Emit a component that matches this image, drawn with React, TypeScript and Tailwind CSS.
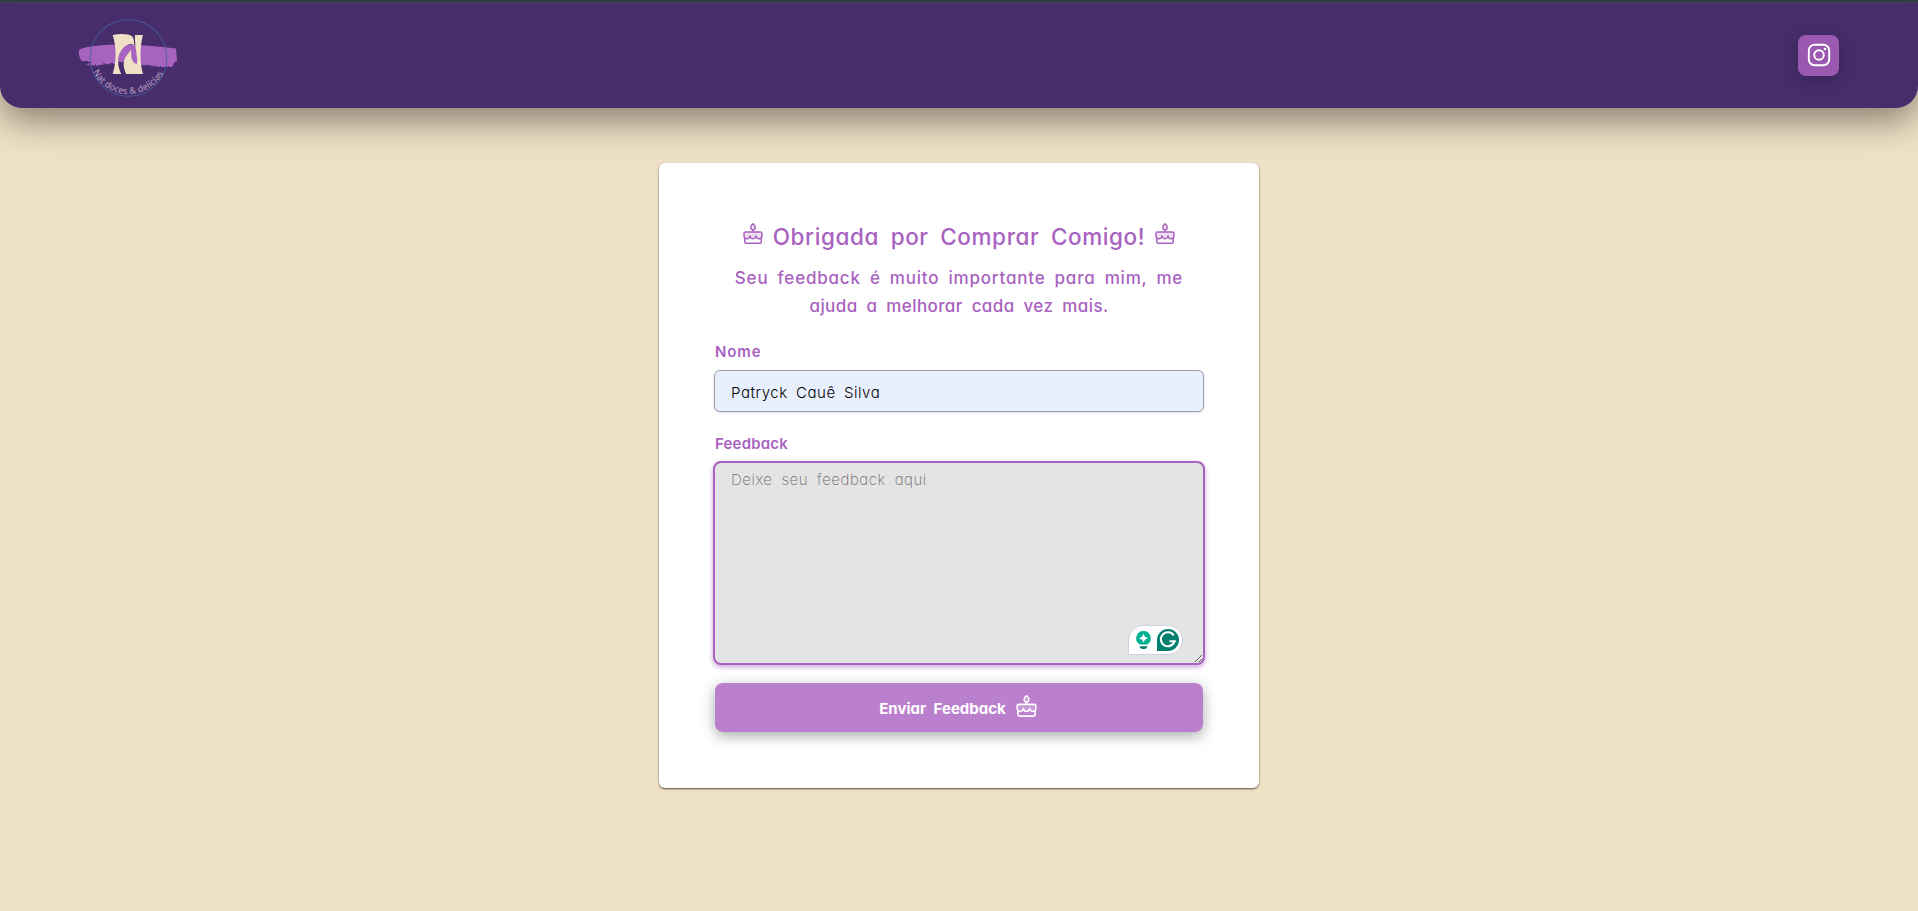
import { PiCakeDuotone } from "react-icons/pi";

function Logo() {
  return (
    <svg width="100" height="80" viewBox="78 18 100 80" className="block">
      <defs>
        <path id="logo-arc" d="M 93 71.500 A 39.250 39.250 0 0 0 164 71.500" />
        <filter id="rough" x="-5%" y="-20%" width="110%" height="140%">
          <feTurbulence type="fractalNoise" baseFrequency="0.35" numOctaves="2" seed="4" />
          <feDisplacementMap in="SourceGraphic" scale="3" />
        </filter>
      </defs>
      <g fill="#a862bf">
        <path d="M79 50 C83 47 95 45.500 110 44.800 C125 44 145 44.500 176 48.500 L177 61 L172 63 L140 62 L100 61.500 L82 61 C79 58 78.500 53 79 50Z" />
        <path
          filter="url(#rough)"
          d="M82 60 L176 60 L172 67 L160 67 L148 65 L130 65.500 L110 63.500 L96 65.500 L86 65 L92 62Z"
        />
      </g>
      <circle cx="128.500" cy="58" r="38.300" fill="none" stroke="#46609c" strokeOpacity="0.75" strokeWidth="1.200" />
      <path
        fill="#472d6b"
        d="M118.200 62 L124 62 C124 66 124.500 70 126.300 74 L121.300 74 C119 69 118 66 118.200 62Z"
      />
      <path
        fill="#efe0c6"
        d="M112.700 35 C118 33.600 124 33.600 128 34.600 C132.500 35.700 134 38 134 42 L134 45.500 L131.700 44 C126 43.500 121 49 118.700 56 C117.300 61 118.200 68 121.300 74 L112.700 74 C116.600 62 116.600 47 112.700 35Z"
      />
      <path
        fill="#efe0c6"
        d="M134.900 35 L142.900 35 C139.800 47 139.800 62 142.900 74 L126.200 74 C123 67 122.800 61 126 56.500 C128 53.500 130 51.500 131.200 49.500 C130.500 57 132 63 137 64 C138 56 134.600 48 134.900 35Z"
      />
      <text fill="#bda8cc" className="font-['Open_Sans',sans-serif] text-[9px]">
        <textPath href="#logo-arc" startOffset="0.300" textLength="86">
          Nat doces &amp; delícias
        </textPath>
      </text>
    </svg>
  );
}

function InstagramIcon() {
  return (
    <svg
      width="24"
      height="24"
      viewBox="0 0 24 24"
      fill="none"
      stroke="#fff"
      strokeWidth="1.900"
      className="mb-px"
    >
      <rect x="1.800" y="1.800" width="20.400" height="20.400" rx="5.800" />
      <circle cx="12" cy="12" r="4.800" />
      <circle cx="18" cy="6" r="1.300" fill="#fff" stroke="none" />
    </svg>
  );
}

function WritingAssistant() {
  return (
    <div className="absolute right-[22px] bottom-[10px] flex h-[30px] w-[55px] items-center gap-[6px] rounded-[15px] rounded-bl-none border border-[#cdd0e0] bg-white pl-[7px]">
      <svg width="15" height="20" viewBox="0 0 15 20">
        <path
          fill="#00b394"
          d="M7.500 1 A7.200 7.200 0 0 1 11.200 14.400 L3.800 14.400 A7.200 7.200 0 0 1 7.500 1Z"
        />
        <path fill="#fff" d="M7.500 3.800 L9 6.700 L12 8.200 L9 9.700 L7.500 12.600 L6 9.700 L3 8.200 L6 6.700Z" />
        <path fill="#008069" d="M3.500 16.200 H11.500 A3.500 3 0 0 1 8.500 19 H6.500 A3.500 3 0 0 1 3.500 16.200Z" />
      </svg>
      <svg width="22" height="22" viewBox="0 0 22 22">
        <path fill="#027e6f" d="M11 0 A11 11 0 0 1 11 22 H0 V11 A11 11 0 0 1 11 0Z" />
        <path
          fill="none"
          stroke="#fff"
          strokeWidth="2.100"
          d="M16.800 6.500 A7 7 0 1 0 17.600 12.300 M18.800 12.300 H12.500"
        />
      </svg>
    </div>
  );
}

export default function App() {
  return (
    <div className="flex h-[911px] flex-col items-center bg-[#eee1c6] font-['Inter',sans-serif] text-[#a862bf] [font-feature-settings:'cv11']">
      <div className="h-[2px] w-full shrink-0 bg-[#35424f]" />
      <header className="flex h-[106px] w-full shrink-0 justify-between rounded-b-[22px] border-t border-[#474747] bg-[#472d6b] pr-[79px] pl-[78px] shadow-[0_12px_36px_rgba(0,0,0,0.45)]">
        <div className="pt-[15px]">
          <Logo />
        </div>
        <a
          href="#instagram"
          aria-label="Instagram"
          className="mt-8 flex size-[41px] items-center justify-center rounded-lg bg-[#9a58b0] shadow-[0_4px_14px_rgba(30,30,60,0.45)]"
        >
          <InstagramIcon />
        </a>
      </header>

      <main className="mt-[55px] flex h-[625px] w-[600px] flex-col rounded-md bg-white px-14 pt-14 shadow-[0_1px_2px_rgba(60,45,20,0.8)]">
        <div className="flex h-9 items-center justify-center">
          <PiCakeDuotone size={24} className="relative -top-[2px] shrink-0" />
          <h1 className="mx-[8px] text-center text-[22.500px] leading-9 font-medium tracking-[0.6px] whitespace-nowrap [word-spacing:5px]">
            Obrigada por Comprar Comigo!
          </h1>
          <PiCakeDuotone size={24} className="relative -top-[2px] shrink-0" />
        </div>
        <p className="mt-[9px] text-center text-[17px] leading-7 font-medium whitespace-nowrap">
          <span className="block tracking-[0.800px] [word-spacing:3.800px]">
            Seu feedback é muito importante para mim, me
          </span>
          <span className="block tracking-[0.400px] [word-spacing:4px]">ajuda a melhorar cada vez mais.</span>
        </p>

        <form className="flex flex-col">
          <label htmlFor="name" className="mt-[20px] text-[15px] leading-6 font-semibold tracking-[0.900px]">
            Nome
          </label>
          <input
            id="name"
            defaultValue="Patryck Cauê Silva"
            className="mt-[6px] -ml-px h-[42px] w-[490px] rounded-md border border-[#9a9fae] bg-[#e8f0fe] px-4 pt-[3px] text-[15px] font-light tracking-[0.550px] text-black shadow-sm outline-none [word-spacing:3.500px]"
          />
          <label htmlFor="feedback" className="mt-[20px] text-[15px] leading-6 font-semibold tracking-[0.200px]">
            Feedback
          </label>
          <div className="relative mt-[5px] -ml-[2px] h-[204px] w-[492px]">
            <textarea
              id="feedback"
              placeholder="Deixe seu feedback aqui"
              className="block size-full resize rounded-lg border-2 border-[#a862bf] bg-[#e4e4e4] px-4 pt-[5px] text-[15px] leading-6 font-extralight tracking-[0.550px] shadow-[0_2px_5px_rgba(168,98,191,0.6)] outline-none [word-spacing:4.200px] placeholder:text-[#6c6c6c]"
            />
            <WritingAssistant />
          </div>
          <button
            type="button"
            className="mt-[18px] flex h-[49px] w-full items-center justify-center rounded-lg bg-[#bb80cd] pt-[3px] text-white shadow-[0_4px_14px_rgba(30,50,45,0.4)]"
          >
            <span className="text-[15px] leading-6 font-bold [word-spacing:4px]">Enviar Feedback</span>
            <PiCakeDuotone size={25} className="relative -top-[2px] ml-2" />
          </button>
        </form>
      </main>
    </div>
  );
}
